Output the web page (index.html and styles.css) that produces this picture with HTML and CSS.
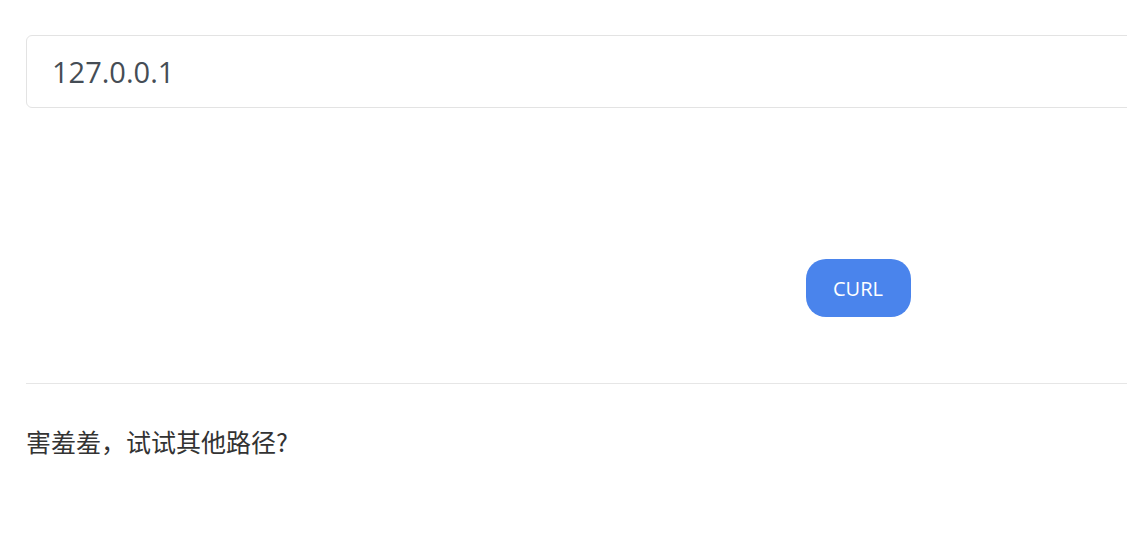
FILE: index.html
```html
<!DOCTYPE html>
<html lang="zh">
<head>
<meta charset="utf-8">
<link rel="stylesheet" href="styles.css">
</head>
<body>
<div class="page">
  <form class="form">
    <input class="url-input" type="text" value="127.0.0.1">
    <div class="actions">
      <button class="btn" type="button">CURL</button>
    </div>
  </form>
  <hr class="divider">
  <p class="message">害羞羞，试试其他路径?</p>
</div>
</body>
</html>
```
FILE: styles.css
```css
html, body {
  margin: 0;
  padding: 0;
  background: #fff;
}
body {
  font-family: "Open Sans", "Noto Sans CJK SC", sans-serif;
  color: #333;
}
.page {
  width: 1664px;
  padding: 35px 26px 0 26px;
}
.form {
  display: flex;
  flex-direction: column;
}
.url-input {
  box-sizing: border-box;
  height: 73px;
  width: 100%;
  border: 1px solid #e3e3e3;
  border-radius: 6px;
  padding: 0 25px;
  font-family: "Open Sans", sans-serif;
  font-size: 29px;
  color: #454d55;
  outline: none;
  background: #fff;
}
.actions {
  display: flex;
  justify-content: center;
  padding-top: 151px;
}
.btn {
  width: 105px;
  height: 58px;
  border: none;
  border-radius: 20px;
  background: #4a84ec;
  color: #fff;
  font-family: "Open Sans", sans-serif;
  font-size: 20px;
  padding: 0;
  line-height: 60px;
}
.divider {
  margin: 66px 0 0 0;
  border: none;
  border-top: 1px solid #e6e6e6;
  height: 0;
}
.message {
  margin: 41px 0 0 0;
  font-family: "Noto Sans CJK SC", sans-serif;
  font-size: 25px;
  line-height: 32px;
  color: #333;
}
```
